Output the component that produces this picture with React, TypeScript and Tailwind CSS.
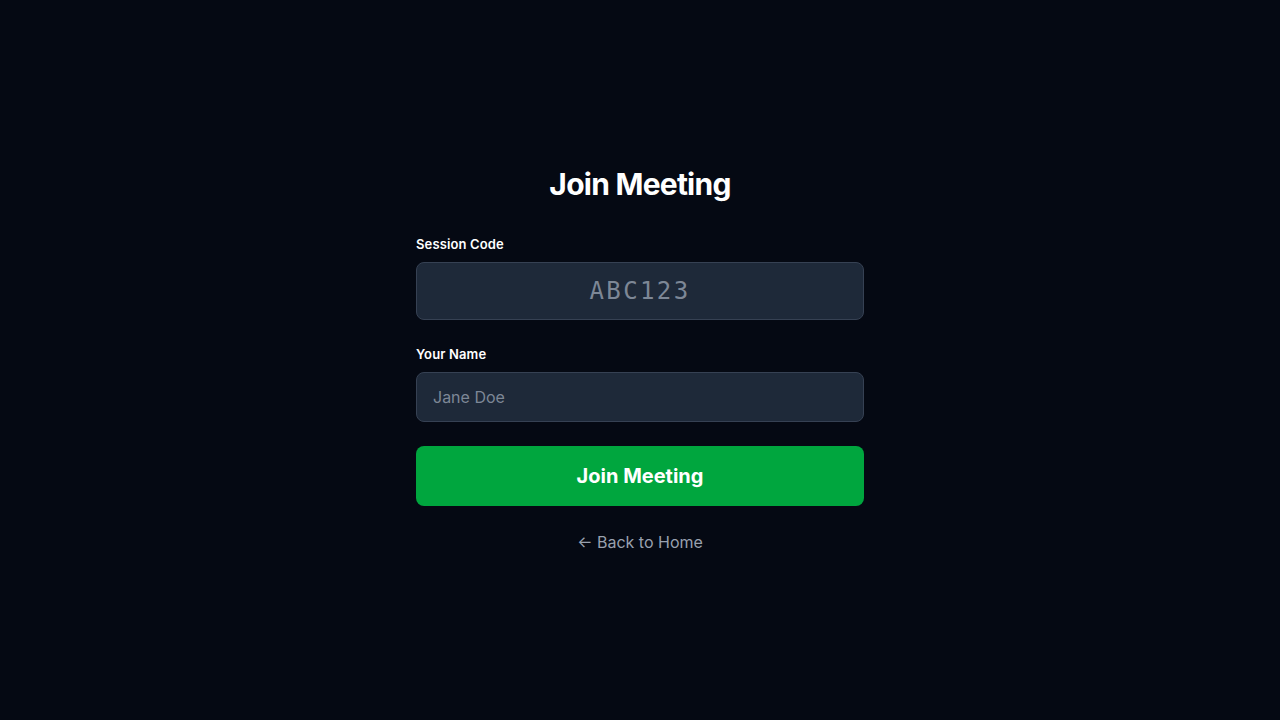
import { useState } from "react";

const App = () => {
  const [code, setCode] = useState("");
  const [name, setName] = useState("");

  return (
    <div
      className="min-h-screen w-full bg-[#050913] flex items-center justify-center text-white"
      style={{ fontFamily: "Inter, 'Noto Sans', sans-serif" }}
    >
      <div className="w-full max-w-md">
        <h1 className="text-3xl font-bold text-center mb-8 tracking-tight">Join Meeting</h1>

        <div className="mb-6">
          <label className="block text-[13px] leading-5 font-semibold mb-2 tracking-[0.01em]">Session Code</label>
          <input
            value={code}
            onChange={(e) => setCode(e.target.value.toUpperCase())}
            placeholder="ABC123"
            className="w-full rounded-lg bg-[#1e2939] border border-[#364153] px-4 py-3 text-2xl leading-8 text-center tracking-widest text-white placeholder:text-[#7d8796] outline-none"
            style={{ fontFamily: "'DejaVu Sans Mono', 'Liberation Mono', monospace" }}
          />
        </div>

        <div className="mb-6">
          <label className="block text-[13px] leading-5 font-semibold mb-2 tracking-[0.01em]">Your Name</label>
          <input
            value={name}
            onChange={(e) => setName(e.target.value)}
            placeholder="Jane Doe"
            className="w-full rounded-lg bg-[#1e2939] border border-[#364153] px-4 py-3 text-base leading-6 text-white placeholder:text-[#7d8796] outline-none"
          />
        </div>

        <button className="w-full rounded-lg bg-[#00a63e] py-4 text-xl leading-7 font-bold text-white">
          Join Meeting
        </button>

        <div className="mt-6 text-center">
          <a href="#" className="text-base leading-6 text-[#99a1af]">
            ← Back to Home
          </a>
        </div>
      </div>
    </div>
  );
};

export default App;
